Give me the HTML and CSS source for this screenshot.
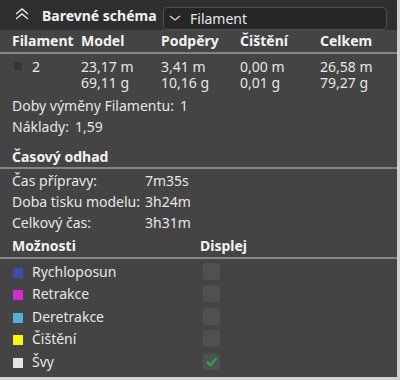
FILE: index.html
```html
<!DOCTYPE html>
<html lang="cs">
<head>
    <meta charset="UTF-8">
    <title>Barevné schéma</title>
    <link rel="stylesheet" href="styles.css">
</head>
<body>
    <div class="panel">
        <div class="header">
            <svg class="collapse" width="16" height="12" viewBox="0 0 16 12">
                <path d="M2 6 L8 1 L14 6 M2 11 L8 6 L14 11" fill="none" stroke="#e6e6e6" stroke-width="1.4"/>
            </svg>
            <span class="title">Barevné schéma</span>
            <div class="select">
                <svg width="12" height="8" viewBox="0 0 12 8">
                    <path d="M1 2 L6 6 L11 2" fill="none" stroke="#dcdcdc" stroke-width="1.3"/>
                </svg>
                <span>Filament</span>
            </div>
        </div>

        <div class="grid thead">
            <span>Filament</span>
            <span>Model</span>
            <span>Podpěry</span>
            <span>Čištění</span>
            <span>Celkem</span>
        </div>
        <div class="grid trow">
            <span class="fil"><i class="swatch dark"></i>2</span>
            <span>23,17 m<br>69,11 g</span>
            <span>3,41 m<br>10,16 g</span>
            <span>0,00 m<br>0,01 g</span>
            <span>26,58 m<br>79,27 g</span>
        </div>

        <div class="lines">
            <div>Doby výměny Filamentu:<span class="val">1</span></div>
            <div>Náklady:<span class="val">1,59</span></div>
        </div>

        <div class="section-title">Časový odhad</div>
        <div class="times">
            <span>Čas přípravy:</span><span>7m35s</span>
            <span>Doba tisku modelu:</span><span>3h24m</span>
            <span>Celkový čas:</span><span>3h31m</span>
        </div>

        <div class="section-title options-head">
            <span>Možnosti</span>
            <span>Displej</span>
        </div>
        <div class="options">
            <div class="opt"><span><i class="swatch" style="background:#3b4cb2"></i>Rychloposun</span><i class="check"></i></div>
            <div class="opt"><span><i class="swatch" style="background:#d42bd4"></i>Retrakce</span><i class="check"></i></div>
            <div class="opt"><span><i class="swatch" style="background:#48b2d9"></i>Deretrakce</span><i class="check"></i></div>
            <div class="opt"><span><i class="swatch" style="background:#f7f700"></i>Čištění</span><i class="check"></i></div>
            <div class="opt"><span><i class="swatch" style="background:#e4e4e4"></i>Švy</span>
                <i class="check on">
                    <svg width="17" height="17" viewBox="0 0 17 17">
                        <path d="M4 9 L7.5 12 L13.5 5" fill="none" stroke="#22a84a" stroke-width="2.4"/>
                    </svg>
                </i>
            </div>
        </div>
    </div>
</body>
</html>
```

FILE: styles.css
```css
body {
    margin: 0;
    background-color: #d2d2d2;
    font-family: 'Noto Sans', 'Open Sans', sans-serif;
    font-size: 14px;
    color: #e6e6e6;
}
.panel {
    width: 397px;
    height: 377px;
    background-color: #444444;
    overflow: hidden;
}
.header {
    height: 30px;
    background-color: #2f2f2f;
    display: flex;
    align-items: center;
}
.collapse {
    margin-left: 14px;
    margin-top: -2px;
}
.title {
    margin-left: 12px;
    font-weight: bold;
    color: #f2f2f2;
}
.select {
    margin-top: 6px;
    margin-left: auto;
    margin-right: 10px;
    width: 222px;
    height: 21px;
    border: 1px solid #4e4e4e;
    border-radius: 4px;
    background-color: #262626;
    display: flex;
    align-items: center;
    color: #e6e6e6;
}
.select svg {
    margin-left: 5px;
    margin-right: 9px;
}
.grid {
    display: grid;
    grid-template-columns: 69px 80px 79px 80px 1fr;
    padding-left: 12px;
}
.thead {
    height: 22px;
    line-height: 22px;
    font-weight: bold;
    color: #f2f2f2;
    border-bottom: 2px solid #858585;
}
.trow {
    padding-top: 5px;
    line-height: 16px;
}
.fil {
    display: flex;
    align-items: flex-start;
}
.swatch {
    display: inline-block;
    width: 10px;
    height: 10px;
    margin-right: 9px;
    vertical-align: -1px;
}
.swatch.dark {
    width: 8px;
    height: 8px;
    background-color: #353535;
    margin: 3px 10px 0 2px;
}
.lines {
    margin-top: 4px;
    padding-left: 12px;
    line-height: 21px;
}
.val {
    margin-left: 6px;
}
.section-title {
    margin-top: 9px;
    height: 21px;
    line-height: 21px;
    padding-left: 12px;
    font-weight: bold;
    color: #f2f2f2;
    border-bottom: 2px solid #858585;
}
.times {
    display: grid;
    grid-template-columns: 133px 1fr;
    padding-left: 12px;
    padding-top: 1px;
    line-height: 21px;
}
.options-head {
    margin-top: 2px;
    height: 22px;
    line-height: 22px;
    display: grid;
    grid-template-columns: 188px 1fr;
}
.options {
    padding-top: 1px;
    padding-left: 13px;
}
.opt {
    height: 22.5px;
    display: grid;
    grid-template-columns: 190px 17px;
    align-items: center;
}
.check {
    display: block;
    width: 17px;
    height: 17px;
    border-radius: 3px;
    background-color: #505050;
}
.check svg {
    display: block;
}
```
